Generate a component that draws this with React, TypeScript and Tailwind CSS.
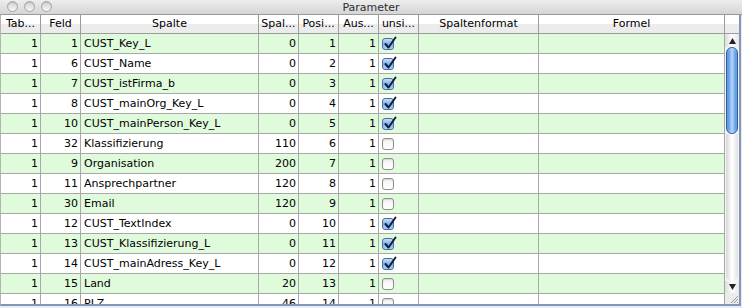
import React from "react";

type Row = {
  tab: number;
  feld: number;
  spalte: string;
  breite: number;
  pos: number;
  aus: number;
  unsigned: boolean;
};

const rows: Row[] = [
  { tab: 1, feld: 1, spalte: "CUST_Key_L", breite: 0, pos: 1, aus: 1, unsigned: true },
  { tab: 1, feld: 6, spalte: "CUST_Name", breite: 0, pos: 2, aus: 1, unsigned: true },
  { tab: 1, feld: 7, spalte: "CUST_istFirma_b", breite: 0, pos: 3, aus: 1, unsigned: true },
  { tab: 1, feld: 8, spalte: "CUST_mainOrg_Key_L", breite: 0, pos: 4, aus: 1, unsigned: true },
  { tab: 1, feld: 10, spalte: "CUST_mainPerson_Key_L", breite: 0, pos: 5, aus: 1, unsigned: true },
  { tab: 1, feld: 32, spalte: "Klassifizierung", breite: 110, pos: 6, aus: 1, unsigned: false },
  { tab: 1, feld: 9, spalte: "Organisation", breite: 200, pos: 7, aus: 1, unsigned: false },
  { tab: 1, feld: 11, spalte: "Ansprechpartner", breite: 120, pos: 8, aus: 1, unsigned: false },
  { tab: 1, feld: 30, spalte: "Email", breite: 120, pos: 9, aus: 1, unsigned: false },
  { tab: 1, feld: 12, spalte: "CUST_TextIndex", breite: 0, pos: 10, aus: 1, unsigned: true },
  { tab: 1, feld: 13, spalte: "CUST_Klassifizierung_L", breite: 0, pos: 11, aus: 1, unsigned: true },
  { tab: 1, feld: 14, spalte: "CUST_mainAdress_Key_L", breite: 0, pos: 12, aus: 1, unsigned: true },
  { tab: 1, feld: 15, spalte: "Land", breite: 20, pos: 13, aus: 1, unsigned: false },
  { tab: 1, feld: 16, spalte: "PLZ", breite: 46, pos: 14, aus: 1, unsigned: false },
];

const cols = "grid grid-cols-[40px_40px_178px_40px_40px_40px_40px_120px_186px]";
const cell = "h-[20px] border-r border-b border-[#a8a8a8] leading-[19px] overflow-hidden whitespace-nowrap";
const num = `${cell} text-right pr-[2px]`;
const headCell =
  "h-[19px] border-r border-b border-[#9c9c9c] leading-[18px] text-center overflow-hidden whitespace-nowrap bg-gradient-to-b from-white from-50% to-[#ececec] to-50%";

function Light() {
  return (
    <div className="w-[11px] h-[11px] rounded-full border border-[#a5a5a5] bg-gradient-to-b from-[#d2d2d2] to-[#f6f6f6] shadow-[inset_0_1px_1px_rgba(0,0,0,0.12)]" />
  );
}

function Checkbox({ checked }: { checked: boolean }) {
  if (!checked) {
    return (
      <div className="w-[12px] h-[12px] rounded-[3px] border border-[#8e8e8e] bg-gradient-to-b from-[#f2f2f2] to-white shadow-[inset_0_1px_1px_rgba(0,0,0,0.12)]" />
    );
  }
  return (
    <div className="relative w-[12px] h-[12px] rounded-[3px] border border-[#4c6e9c] bg-gradient-to-b from-[#c7def7] via-[#7fb0e8] to-[#a9d0f7]">
      <svg className="absolute left-[1px] top-[-3px]" width="13" height="14" viewBox="0 0 13 14">
        <path d="M1.5 8 L4.5 11.5 L11.5 1.5" fill="none" stroke="#10213f" strokeWidth="2" strokeLinecap="round" strokeLinejoin="round" />
      </svg>
    </div>
  );
}

function Scrollbar() {
  return (
    <div className="flex flex-col w-[14px] h-full bg-[#f3f3f3]">
      <div className="h-[13px] flex items-center justify-center bg-gradient-to-r from-[#dcdcdc] via-white to-[#e6e6e6]">
        <svg width="7" height="6" viewBox="0 0 7 6">
          <path d="M3.5 0 L7 6 L0 6 Z" fill="#222" />
        </svg>
      </div>
      <div className="h-[87px] mx-[1px] rounded-full border border-[#2a5caa] bg-gradient-to-r from-[#3a7fd8] via-[#b6d8fb] to-[#3f82d8] shadow-[inset_0_0_2px_rgba(255,255,255,0.6)]" />
      <div className="flex-1 mx-[1px] rounded-b-full bg-gradient-to-r from-[#d8d8d8] via-white to-[#e2e2e2]" />
      <div className="h-[12px] flex items-center justify-center bg-gradient-to-r from-[#dcdcdc] via-white to-[#e6e6e6]">
        <svg width="7" height="6" viewBox="0 0 7 6">
          <path d="M0 0 L7 0 L3.5 6 Z" fill="#222" />
        </svg>
      </div>
      <div className="h-[11px] relative bg-[#ececec]">
        <svg className="absolute right-0 bottom-0" width="11" height="11" viewBox="0 0 11 11">
          <path d="M10 3 L3 10 M10 6 L6 10 M10 9 L9 10" stroke="#9a9a9a" strokeWidth="1" />
        </svg>
      </div>
    </div>
  );
}

export default function App() {
  return (
    <div className="w-[742px] h-[308px] overflow-hidden flex flex-col bg-[#ececec] text-[11px] text-black font-['DejaVu_Sans',sans-serif]">
      {/* Title bar */}
      <div className="relative h-[15px] flex items-center justify-center border-b border-[#9a9a9a] bg-gradient-to-b from-[#ededed] to-[#d5d5d5] text-[#2e2e2e]">
        <div className="absolute left-[7px] top-[1px] flex gap-[6px]">
          <Light />
          <Light />
          <Light />
        </div>
        <span className="leading-none">Parameter</span>
      </div>

      {/* Table */}
      <div className="flex h-[291px] w-[741px] border-l border-[#b5b5b5] border-r-2 border-b-2 border-r-[#7f97bb] border-b-[#7f97bb] bg-white">
        <div className="w-[724px] flex flex-col">
          <div className={cols}>
            <div className={headCell}>Tab...</div>
            <div className={headCell}>Feld</div>
            <div className={headCell}>Spalte</div>
            <div className={headCell}>Spal...</div>
            <div className={headCell}>Posi...</div>
            <div className={headCell}>Aus...</div>
            <div className={headCell}>unsi...</div>
            <div className={headCell}>Spaltenformat</div>
            <div className={headCell}>Formel</div>
          </div>
          <div className="flex-1 overflow-hidden">
            {rows.map((r, i) => (
              <div key={r.pos} className={`${cols} ${i % 2 === 0 ? "bg-[#e0fadc]" : "bg-white"}`}>
                <div className={num}>{r.tab}</div>
                <div className={num}>{r.feld}</div>
                <div className={`${cell} pl-[3px]`}>{r.spalte}</div>
                <div className={num}>{r.breite}</div>
                <div className={num}>{r.pos}</div>
                <div className={num}>{r.aus}</div>
                <div className={`${cell} flex items-center pl-[3px]`}>
                  <Checkbox checked={r.unsigned} />
                </div>
                <div className={cell} />
                <div className={cell} />
              </div>
            ))}
          </div>
        </div>
        <div className="flex flex-col w-[14px]">
          <div className="h-[19px] border-b border-[#9c9c9c] bg-gradient-to-b from-white from-50% to-[#ececec] to-50%" />
          <div className="flex-1">
            <Scrollbar />
          </div>
        </div>
      </div>
    </div>
  );
}
